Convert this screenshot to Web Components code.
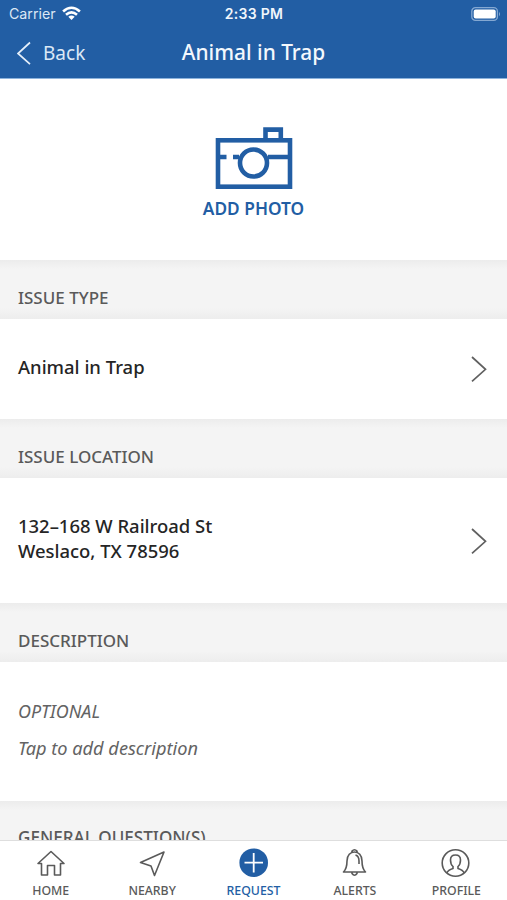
<!DOCTYPE html>
<html lang="en">
<head>
<meta charset="utf-8">
<title>Animal in Trap</title>
<style>
html, body { margin: 0; height: 100%; overflow: hidden; background: #fff; }
body { font-family: "Noto Sans", "Open Sans", sans-serif; --blue: #225ea4; --ink: #252525; --gray: #5a5a5a; }
</style>
</head>
<body>
<report-screen></report-screen>
<script>
function define(name, html) {
  const template = document.createElement('template');
  template.innerHTML = html;
  customElements.define(name, class extends HTMLElement {
    constructor() {
      super();
      this.attachShadow({ mode: 'open' }).append(template.content.cloneNode(true));
    }
  });
}

define('status-bar', `
<style>
:host { display: grid; grid-template-columns: 1fr auto 1fr; align-items: center; height: 27px; padding: 0 6px 0 9px; box-sizing: border-box; font: 14px/27px Inter, sans-serif; color: #fff; }
.carrier { display: flex; align-items: center; gap: 6px; color: #dce8f5; font-size: 14.2px; }
.time { font-weight: 600; font-size: 14px; letter-spacing: .3px; color: #f1f6fc; margin-right: 2px; }
.battery { justify-self: end; }
svg { display: block; }
</style>
<div class="carrier"><span>Carrier</span>
<svg width="19" height="15" viewBox="0 0 19 15" fill="none" stroke="#fff" stroke-width="2.6"><path d="M1.1 5.500Q9.500 -2 17.900 5.500M4 8.700Q9.500 3.900 15 8.700"/><path d="M9.500 14L6.300 10.800Q9.500 8.200 12.700 10.800Z" fill="#fff" stroke="none"/></svg></div>
<div class="time">2:33 PM</div>
<svg class="battery" width="30" height="14" viewBox="0 0 30 14"><rect x=".8" y=".7" width="25.600" height="12.600" rx="3.600" fill="none" stroke="#84a8d2" stroke-width="1.300"/><rect x="2.700" y="2.600" width="22" height="9" rx="2" fill="#fff"/><path d="M28 4.700Q30 7 28 9.300Z" fill="#84a8d2"/></svg>`);

define('nav-bar', `
<style>
:host { display: grid; grid-template-columns: 1fr auto 1fr; align-items: center; height: 52px; padding: 0 17px; box-sizing: border-box; color: #f3f8fd; border-bottom: 1px solid #8db3dc; }
.back { display: flex; align-items: center; gap: 11px; font-size: 19px; line-height: 50px; color: #dbe8f6; }
.title { font-size: 20.900px; font-weight: 500; line-height: 48px; padding-bottom: 2px; }
svg { display: block; }
</style>
<div class="back"><svg width="15" height="24" viewBox="0 0 15 24" fill="none" stroke="#e5effa" stroke-width="1.700"><path d="M13 1.500L1 12.500L13 23.200"/></svg><span>Back</span></div>
<div class="title"><slot></slot></div>`);

define('add-photo', `
<style>
:host { display: flex; flex-direction: column; align-items: center; height: 181px; padding-top: 46px; box-sizing: border-box; background: #fff; color: var(--blue); }
svg { display: block; }
.label { margin-top: 7px; font-size: 17.300px; font-weight: 600; line-height: 24px; }
</style>
<svg width="78" height="65" viewBox="0 0 78 65" fill="none" stroke="currentColor" stroke-width="4.600"><rect x="3" y="15.300" width="72" height="46.400"/><path d="M50.500 14V4.600H65.800V14M3 32H11.500M18 32H24M53 32H75"/><circle cx="38.500" cy="38" r="13.500"/></svg>
<div class="label"><slot></slot></div>`);

define('section-heading', `
<style>
:host { display: block; height: 59px; padding: 26px 18px 0; box-sizing: border-box; font-size: 17px; font-weight: 500; line-height: 24px; color: var(--gray); background: linear-gradient(#ececec, #f4f4f4 9px, #f4f4f4 48px, #ededed); }
:host(.last) { padding-top: 25px; font-size: 17.100px; }
</style><slot></slot>`);

define('info-row', `
<style>
:host { display: flex; align-items: center; justify-content: space-between; padding: 0 20px 0 18px; box-sizing: border-box; background: #fff; color: var(--ink); font-size: 18.450px; font-weight: 500; line-height: 25px; }
.text { margin-top: -5px; }
svg { display: block; }
</style>
<div class="text"><slot></slot></div>
<svg width="16" height="26" viewBox="0 0 16 26" fill="none" stroke="#606060" stroke-width="1.700"><path d="M1 1L14.500 13.300L1 25.300"/></svg>`);

define('description-box', `
<style>
:host { display: flex; flex-direction: column; gap: 12px; height: 139px; padding: 37px 18px 0; box-sizing: border-box; background: #fff; color: #636363; font-size: 18.200px; font-style: italic; line-height: 25px; }
.label { font-size: 17.900px; }
</style>
<div class="label"><slot name="label"></slot></div><div><slot></slot></div>`);

define('tab-item', `
<style>
:host { display: flex; flex-direction: column; align-items: center; flex: 1; padding-top: 7px; color: var(--gray); font-size: 12.300px; font-weight: 500; line-height: 18px; }
:host([active]) { color: var(--blue); }
.label { margin-top: 4px; }
</style>
<slot name="icon"></slot><div class="label"><slot></slot></div>`);

define('tab-bar', `
<style>
:host { display: flex; position: absolute; left: 0; right: 0; bottom: 0; height: 60px; box-sizing: border-box; background: #fff; border-top: 1px solid #dedede; }
svg { display: block; }
</style>
<tab-item><svg slot="icon" width="30" height="30" viewBox="0 0 30 30" fill="none" stroke="currentColor" stroke-width="1.600" stroke-linejoin="round"><path d="M5.500 15.500H2L15 3.500L28 15.500H24.500V27H18.500V17.500H11.500V27H5.500Z"/></svg>HOME</tab-item>
<tab-item><svg slot="icon" width="30" height="30" viewBox="0 0 30 30" fill="none" stroke="currentColor" stroke-width="1.600" stroke-linejoin="round"><path d="M3.500 14.500L27 4L17.500 27.500L14 18Z"/></svg>NEARBY</tab-item>
<tab-item active><svg slot="icon" width="30" height="30" viewBox="0 0 30 30"><circle cx="14.700" cy="14.700" r="14.300" fill="currentColor"/><path d="M5.500 14.700H24M14.700 5V24.500" stroke="#fff" stroke-width="1.800"/></svg>REQUEST</tab-item>
<tab-item><svg slot="icon" width="30" height="30" viewBox="0 0 30 30" fill="none" stroke="currentColor" stroke-width="1.600" stroke-linejoin="round"><path d="M3.500 24H25.500Q22 20.500 22 13C22 7 18.500 4 14.500 4S7 7 7 13Q7 20.500 3.500 24ZM12 4V3Q14.500 .5 17 3V4M12 24V25.500Q14.500 29 17 25.500V24M15.500 7Q19 8 19 13V16"/></svg>ALERTS</tab-item>
<tab-item><svg slot="icon" width="30" height="30" viewBox="0 0 30 30" fill="none" stroke="currentColor" stroke-width="1.600"><circle cx="14.500" cy="15" r="13.300"/><path d="M5.800 25Q7 22 12 20.500V18.500Q9.500 16.500 9.500 12Q9.500 7 14.500 7T19.500 12Q19.500 16.500 17 18.500V20.500Q22 22 23.200 25"/></svg>PROFILE</tab-item>`);

define('report-screen', `
<style>
:host { display: block; position: relative; height: 900px; overflow: hidden; background: #f4f4f4; }
header { background: var(--blue); }
.type { height: 100px; }
.location { height: 125px; }
</style>
<header><status-bar></status-bar><nav-bar>Animal in Trap</nav-bar></header>
<main>
<add-photo>ADD PHOTO</add-photo>
<section-heading>ISSUE TYPE</section-heading>
<info-row class="type">Animal in Trap</info-row>
<section-heading>ISSUE LOCATION</section-heading>
<info-row class="location">132–168 W Railroad St<br>Weslaco, TX 78596</info-row>
<section-heading>DESCRIPTION</section-heading>
<description-box><span slot="label">OPTIONAL</span>Tap to add description</description-box>
<section-heading class="last">GENERAL QUESTION(S)</section-heading>
</main>
<tab-bar></tab-bar>`);
</script>
</body>
</html>
